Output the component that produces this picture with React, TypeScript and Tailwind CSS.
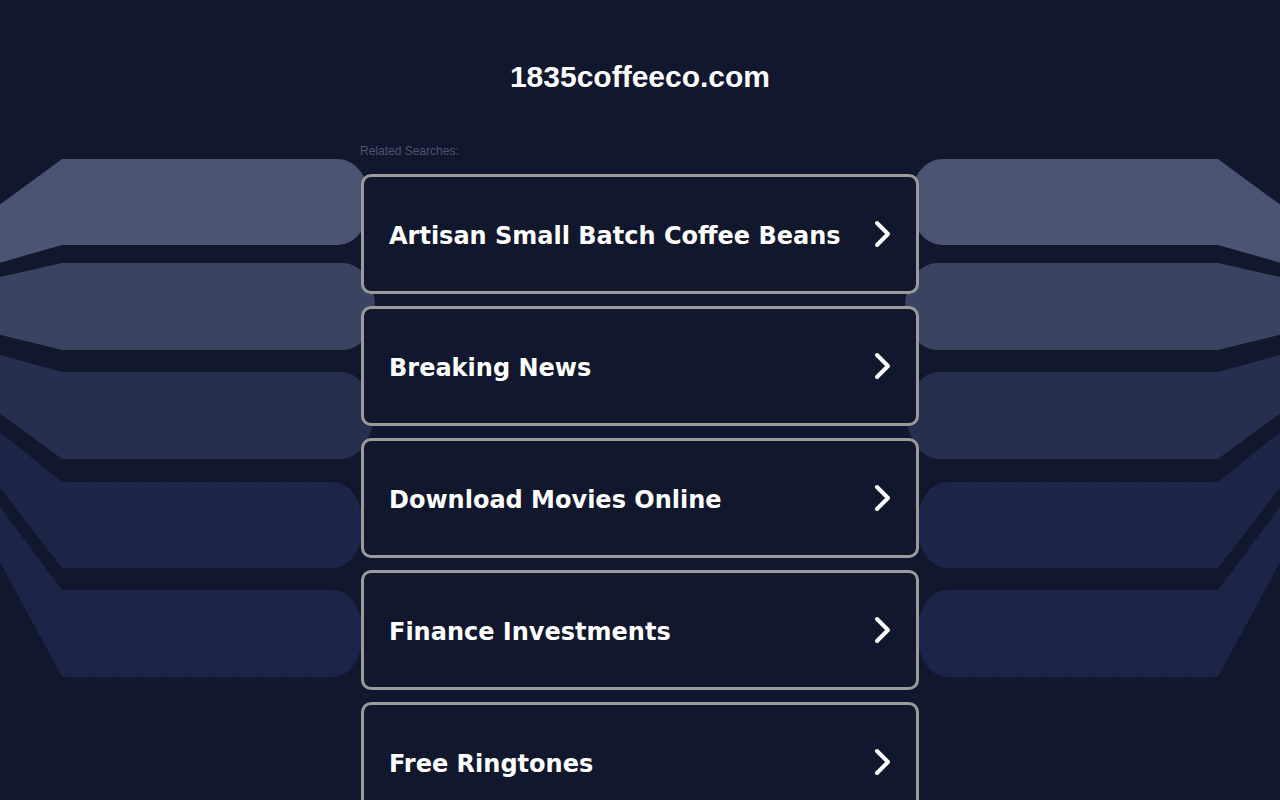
import React from "react";

const searches = [
  "Artisan Small Batch Coffee Beans",
  "Breaking News",
  "Download Movies Online",
  "Finance Investments",
  "Free Ringtones",
];

// left side bands, mirrored for the right side
const bands = [
  { d: "M-40 234 L62 159 L338 159 A32 43 0 0 1 338 245 L62 245 L-40 274 Z", fill: "#4b5573", dots: false },
  { d: "M-40 286 L62 263 L343 263 A32 43.5 0 0 1 343 350 L62 350 L-40 325 Z", fill: "#3a4461", dots: false },
  { d: "M-40 344 L62 372 L341 372 A32 43.5 0 0 1 341 459 L62 459 L-40 384 Z", fill: "#262f4d", dots: false },
  { d: "M-40 400 L62 482 L333 482 A30 43 0 0 1 333 568 L62 568 L-40 436 Z", fill: "#1c2546", dots: true },
  { d: "M-40 453 L62 590 L333 590 A30 43.5 0 0 1 333 677 L62 677 L-40 488 Z", fill: "#1b2446", dots: true },
];

function Bands() {
  return (
    <svg className="absolute left-0 top-0" width="1280" height="800" viewBox="0 0 1280 800">
      <defs>
        <pattern id="dots" width="3" height="3" patternUnits="userSpaceOnUse">
          <rect x="0" y="0" width="1" height="1" fill="#2a3560" />
        </pattern>
      </defs>
      {[false, true].map((mirror) => (
        <g key={String(mirror)} transform={mirror ? "translate(1280,0) scale(-1,1)" : undefined}>
          {bands.map((b, i) => (
            <g key={i}>
              <path d={b.d} fill={b.fill} />
              {b.dots && <path d={b.d} fill="url(#dots)" opacity="0.35" />}
            </g>
          ))}
        </g>
      ))}
    </svg>
  );
}

function Chevron() {
  return (
    <svg width="22" height="30" viewBox="0 0 22 30" className="shrink-0">
      <path d="M5 4 L16 15 L5 26" fill="none" stroke="#ffffff" strokeWidth="4" strokeLinecap="round" strokeLinejoin="round" />
    </svg>
  );
}

export default function App() {
  return (
    <div className="relative min-h-screen h-[800px] overflow-hidden bg-[#11172d]">
      <Bands />
      <div className="relative mx-auto w-[558px]">
        <h1 className="pt-[59px] text-center text-[30px] leading-9 font-bold text-white font-['Liberation_Sans',Arial,sans-serif]">
          1835coffeeco.com
        </h1>
        <div className="mt-[48px] -ml-px text-[12px] leading-4 text-[#4b5573] font-['Liberation_Sans',Arial,sans-serif]">
          Related Searches:
        </div>
        <div className="mt-[15px] flex flex-col gap-3">
          {searches.map((s) => (
            <a
              key={s}
              href="#"
              className="flex h-[120px] items-center justify-between rounded-[10px] border-[3px] border-[#9b9b9b] bg-[#11172d] pl-[25px] pr-[22px]"
            >
              <span className="pt-[4px] text-[24px] font-bold text-white font-['DejaVu_Sans',Verdana,sans-serif]">
                {s}
              </span>
              <Chevron />
            </a>
          ))}
        </div>
      </div>
    </div>
  );
}
